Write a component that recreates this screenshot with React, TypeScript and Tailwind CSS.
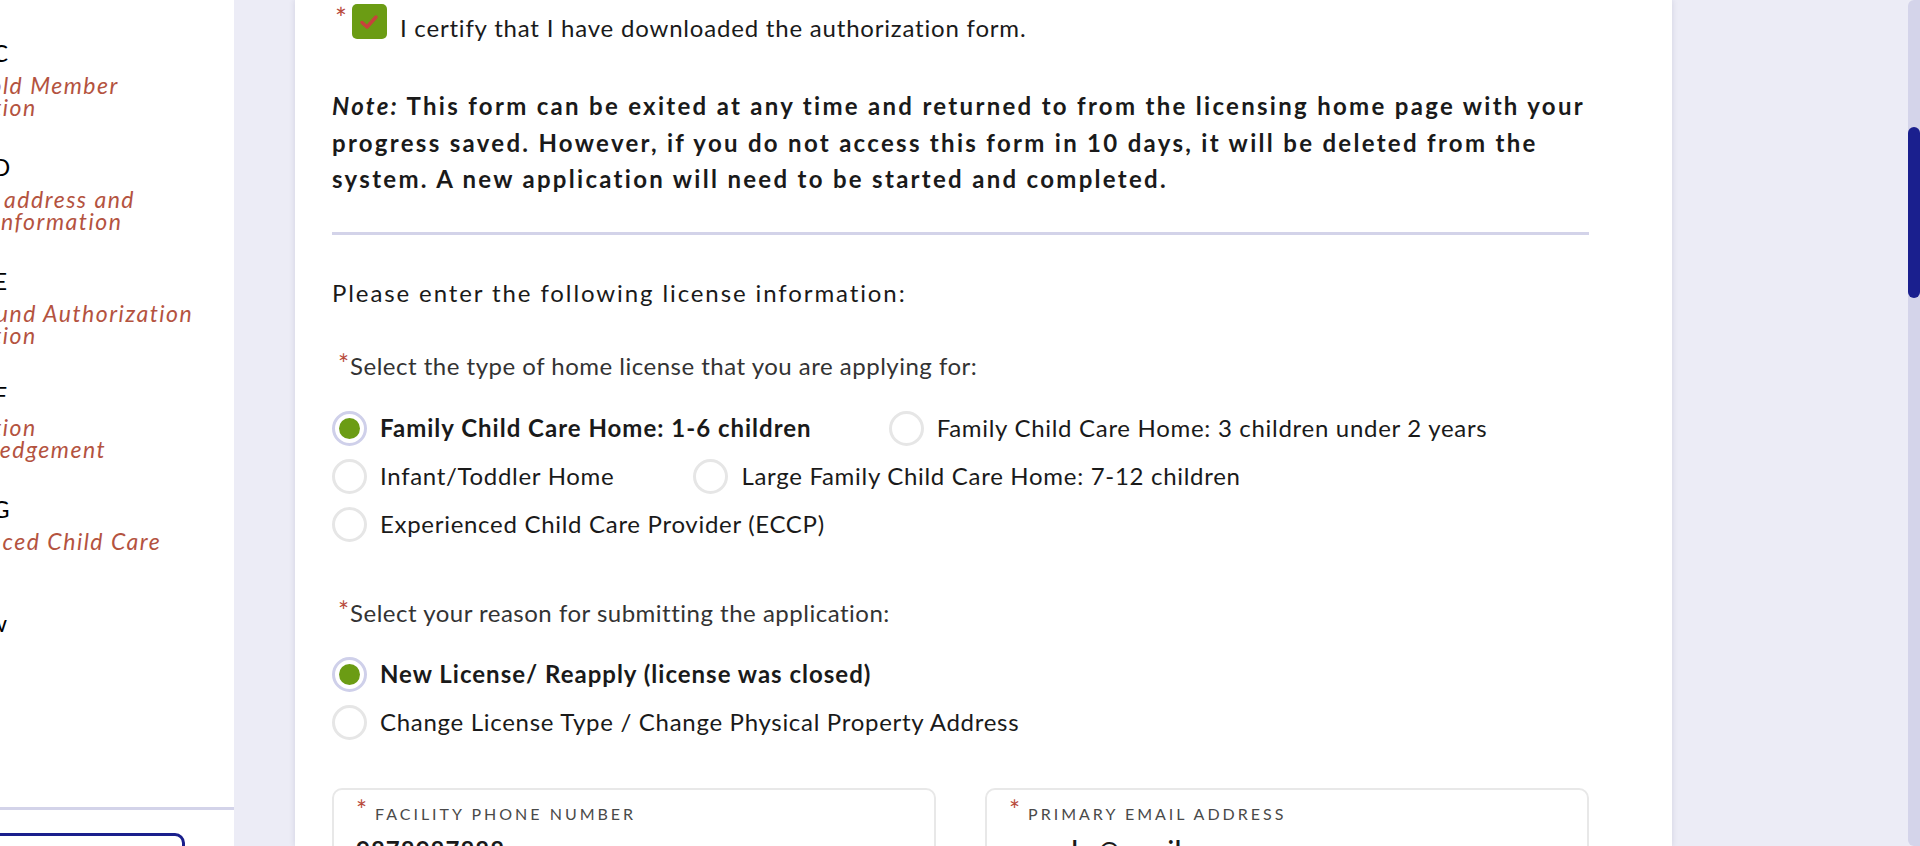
const steps = [
  { title: "Section C", desc: ["Household Member", "Information"] },
  { title: "Section D", desc: ["Physical address and", "mailing information"] },
  { title: "Section E", desc: ["Background Authorization", "Information"] },
  { title: "Section F", desc: ["Information", "Acknowledgement"] },
  { title: "Section G", desc: ["Experienced Child Care"] },
  { title: "Review", desc: [] },
];

function Radio({ checked }: { checked?: boolean }) {
  return checked ? (
    <span className="w-[35px] h-[35px] shrink-0 rounded-full border-[3px] border-[#cfd0ea] flex items-center justify-center">
      <span className="w-[21px] h-[21px] rounded-full bg-[#6b9c14]" />
    </span>
  ) : (
    <span className="w-[35px] h-[35px] shrink-0 rounded-full border-[3px] border-[#e6e6e6]" />
  );
}

function Option({ label, checked }: { label: string; checked?: boolean }) {
  return (
    <label className="flex h-[35px] items-center gap-[13px] whitespace-nowrap leading-[28px]">
      <Radio checked={checked} />
      <span className={checked ? "font-bold tracking-[1px]" : "tracking-[0.7px]"}>{label}</span>
    </label>
  );
}

function Required({ children }: { children: React.ReactNode }) {
  return (
    <div className="flex items-start text-[#333] leading-[30px]">
      <span className="ml-[6px] text-[26px] leading-none text-[#b84a3b]">*</span>
      <span className="ml-[1px] tracking-[0.5px]">{children}</span>
    </div>
  );
}

function Field({ label, value }: { label: string; value: string }) {
  return (
    <div className="h-[120px] border-2 border-[#e8e8e8] rounded-[10px] px-[22px] pt-[7px]">
      <div className="flex items-start">
        <span className="text-[26px] leading-none text-[#b84a3b]">*</span>
        <span className="ml-[8px] mt-[7px] text-[16px] leading-[20px] tracking-[3px] text-[#4a4a4a] uppercase">{label}</span>
      </div>
      <div className="mt-[12px] font-bold text-[24px] leading-[28px] tracking-[1px]">{value}</div>
    </div>
  );
}

export default function App() {
  return (
    <div className="flex h-[846px] w-[1920px] overflow-hidden bg-[#ececf6] font-['Lato',sans-serif] text-[#1a1a1a]">
      <aside className="w-[234px] shrink-0 bg-white flex flex-col overflow-hidden">
        <div className="flex-1 min-h-0 overflow-hidden pt-[39px]">
          {steps.map((s) => (
            <div key={s.title} className="h-[114px]">
              <div className="-ml-[93px] w-[100px] text-right text-[24px] leading-[28px] text-black whitespace-nowrap">{s.title}</div>
              <div className="-ml-[92px] mt-[7px] italic text-[23px] leading-[22px] text-[#b4533f] whitespace-nowrap tracking-[1.5px]">
                {s.desc.map((d) => (
                  <div key={d}>{d}</div>
                ))}
              </div>
            </div>
          ))}
        </div>
        <div className="h-[3px] shrink-0 bg-[#d3d3e9]" />
        <div className="h-[36px] shrink-0 pt-[23px] overflow-hidden">
          <div className="-ml-[20px] w-[205px] h-[40px] border-[3px] border-[#1a1f8c] rounded-[10px]" />
        </div>
      </aside>

      <main className="flex-1 pl-[61px]">
        <section className="w-[1377px] h-full bg-white shadow-[0_0_6px_rgba(40,40,90,0.14)] pl-[37px] pt-[4px] text-[24px]">
          <div className="w-[1257px]">
            <div className="flex items-start">
              <span className="ml-[3px] text-[28px] leading-none text-[#b84a3b]">*</span>
              <span className="ml-[5px] w-[35px] h-[35px] rounded-[5px] bg-[#6b9c14] flex items-center justify-center">
                <svg width="20" height="16" viewBox="0 0 20 16">
                  <path d="M3 8.5 L8 13 L17 3" fill="none" stroke="#c8423c" strokeWidth="3.5" strokeLinecap="round" strokeLinejoin="round" />
                </svg>
              </span>
              <span className="ml-[13px] mt-[10px] leading-[28px] tracking-[0.8px] whitespace-nowrap">I certify that I have downloaded the authorization form.</span>
            </div>

            <p className="mt-[46px] font-bold leading-[36.5px] tracking-[2.3px] whitespace-nowrap">
              <em>Note:</em> This form can be exited at any time and returned to from the licensing home page with your
              <br />
              progress saved. However, if you do not access this form in 10 days, it will be deleted from the
              <br />
              system. A new application will need to be started and completed.
            </p>

            <div className="mt-[34px] h-[3px] bg-[#d3d3e9]" />

            <p className="mt-[43px] leading-[30px] tracking-[1.9px]">Please enter the following license information:</p>

            <div className="mt-[43px]">
              <Required>Select the type of home license that you are applying for:</Required>
            </div>
            <div className="mt-[30px] flex flex-col gap-[13px]">
              <div className="flex gap-[77px]">
                <Option label="Family Child Care Home: 1-6 children" checked />
                <Option label="Family Child Care Home: 3 children under 2 years" />
              </div>
              <div className="flex gap-[79px]">
                <Option label="Infant/Toddler Home" />
                <Option label="Large Family Child Care Home: 7-12 children" />
              </div>
              <Option label="Experienced Child Care Provider (ECCP)" />
            </div>

            <div className="mt-[56px]">
              <Required>Select your reason for submitting the application:</Required>
            </div>
            <div className="mt-[29px] flex flex-col gap-[13px]">
              <Option label="New License/ Reapply (license was closed)" checked />
              <Option label="Change License Type / Change Physical Property Address" />
            </div>

            <div className="mt-[48px] grid grid-cols-2 gap-[49px]">
              <Field label="Facility Phone Number" value="9878987888" />
              <Field label="Primary Email Address" value="menaka@gmail.com" />
            </div>
          </div>
        </section>
      </main>

      <div className="w-[12px] shrink-0 bg-[#d4d4ea] rounded-l-[6px]">
        <div className="mt-[127px] h-[171px] bg-[#1a1f8e] rounded-[6px]" />
      </div>
    </div>
  );
}
